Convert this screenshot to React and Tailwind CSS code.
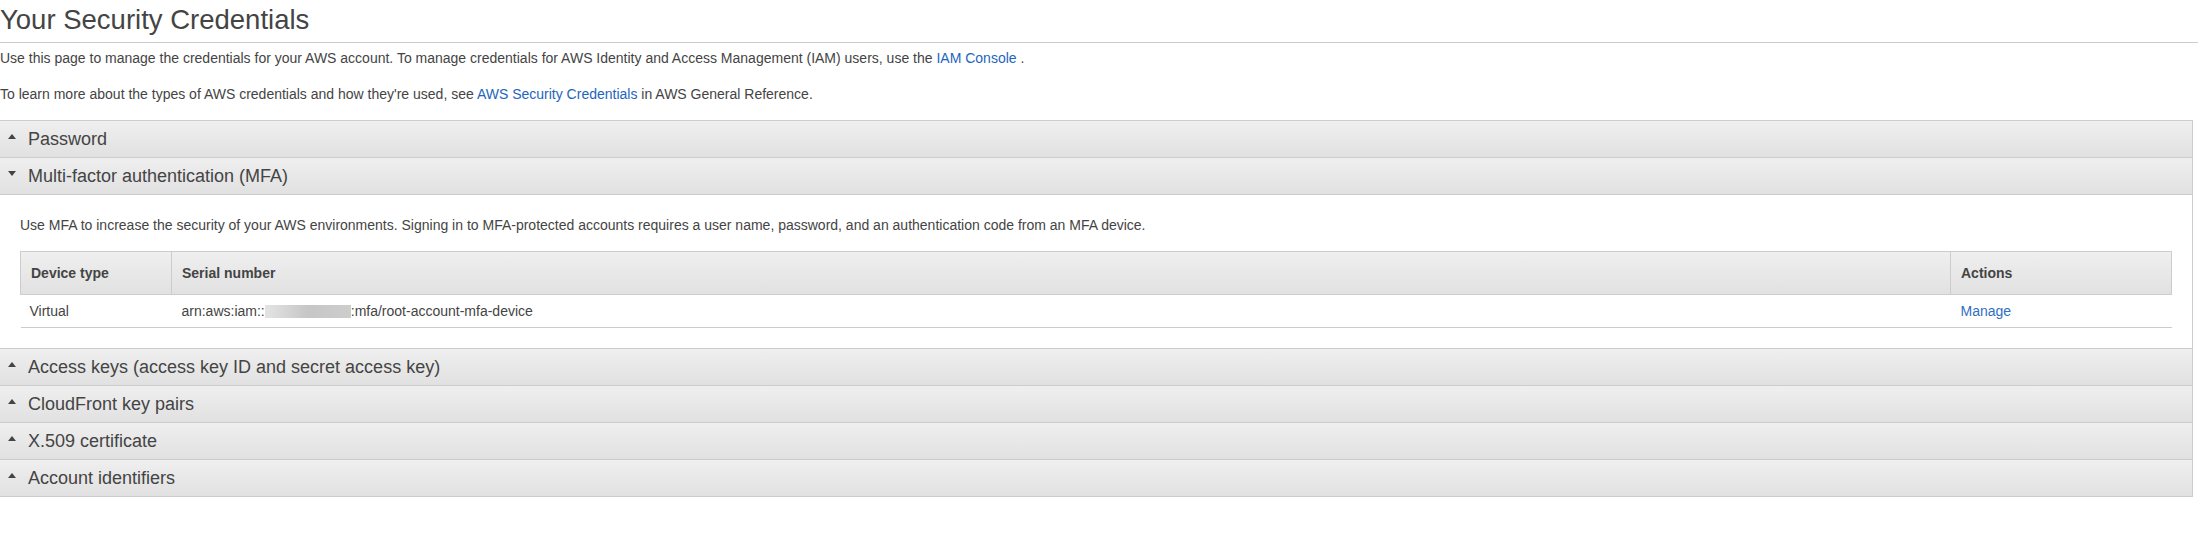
import React from "react";

const sections = [
  { key: "password", title: "Password", open: false },
  { key: "mfa", title: "Multi-factor authentication (MFA)", open: true },
  { key: "access", title: "Access keys (access key ID and secret access key)", open: false },
  { key: "cloudfront", title: "CloudFront key pairs", open: false },
  { key: "x509", title: "X.509 certificate", open: false },
  { key: "account", title: "Account identifiers", open: false },
];

const Caret = ({ open }) => (
  <svg width="8" height="5" viewBox="0 0 8 5" className="ml-[8px] mr-[12px] mb-[6px] shrink-0">
    {open ? <polygon points="0,0 8,0 4,5" fill="#444" /> : <polygon points="0,5 8,5 4,0" fill="#444" />}
  </svg>
);

const MfaContent = () => {
  return (
    <div className="bg-white px-[20px] pt-[20px] pb-[20px] border-b border-[#cccccc]">
      <p className="text-[14px] leading-[20px] text-[#444]">
        Use MFA to increase the security of your AWS environments. Signing in to MFA-protected accounts requires a user name, password, and an authentication code from an MFA device.
      </p>
      <table className="mt-[16px] w-full border-collapse text-[14px] text-[#444]">
        <thead>
          <tr className="h-[43px] bg-gradient-to-b from-[#efefef] to-[#e1e1e1]">
            <th className="w-[151px] border border-[#cccccc] px-[10px] text-left font-bold">Device type</th>
            <th className="border border-[#cccccc] px-[10px] text-left font-bold">Serial number</th>
            <th className="w-[221px] border border-[#cccccc] px-[10px] text-left font-bold">Actions</th>
          </tr>
        </thead>
        <tbody>
          <tr className="h-[33px] border-b border-[#cccccc]">
            <td className="px-[9px]">Virtual</td>
            <td className="px-[10px]">
              <span className="inline-flex items-center">
                arn:aws:iam::
                <span className="inline-block h-[13px] w-[86px] bg-gradient-to-r from-[#e4e4e4] via-[#c6c6c6] to-[#cdcdcd]" />
                :mfa/root-account-mfa-device
              </span>
            </td>
            <td className="px-[10px]">
              <a href="#" className="text-[#2f6fc4]">
                Manage
              </a>
            </td>
          </tr>
        </tbody>
      </table>
    </div>
  );
};

export default function App() {
  return (
    <div className="w-[2198px] min-h-[550px] bg-white font-['Liberation_Sans',Arial,sans-serif] text-[#444]">
      <h1 className="pt-[3px] pb-[5px] text-[27.5px] leading-[34px] font-normal text-[#444] border-b border-[#cccccc]">Your Security Credentials</h1>
      <p className="mt-[5px] text-[14px] leading-[20px]">
        Use this page to manage the credentials for your AWS account. To manage credentials for AWS Identity and Access Management (IAM) users, use the{" "}
        <a href="#" className="text-[#1e65bd]">
          IAM Console
        </a>{" "}
        .
      </p>
      <p className="mt-[16px] text-[14px] leading-[20px]">
        To learn more about the types of AWS credentials and how they're used, see{" "}
        <a href="#" className="text-[#1e65bd]">
          AWS Security Credentials
        </a>{" "}
        in AWS General Reference.
      </p>
      <div className="mt-[16px] w-[2193px] border-t border-r border-[#cccccc]">
        {sections.map((s) => (
          <div key={s.key}>
            <div className="flex h-[37px] items-center border-b border-[#cccccc] bg-gradient-to-b from-[#efefef] to-[#e1e1e1] text-[18px] text-[#444]">
              <Caret open={s.open} />
              <span>{s.title}</span>
            </div>
            {s.open ? <MfaContent /> : null}
          </div>
        ))}
      </div>
    </div>
  );
}
